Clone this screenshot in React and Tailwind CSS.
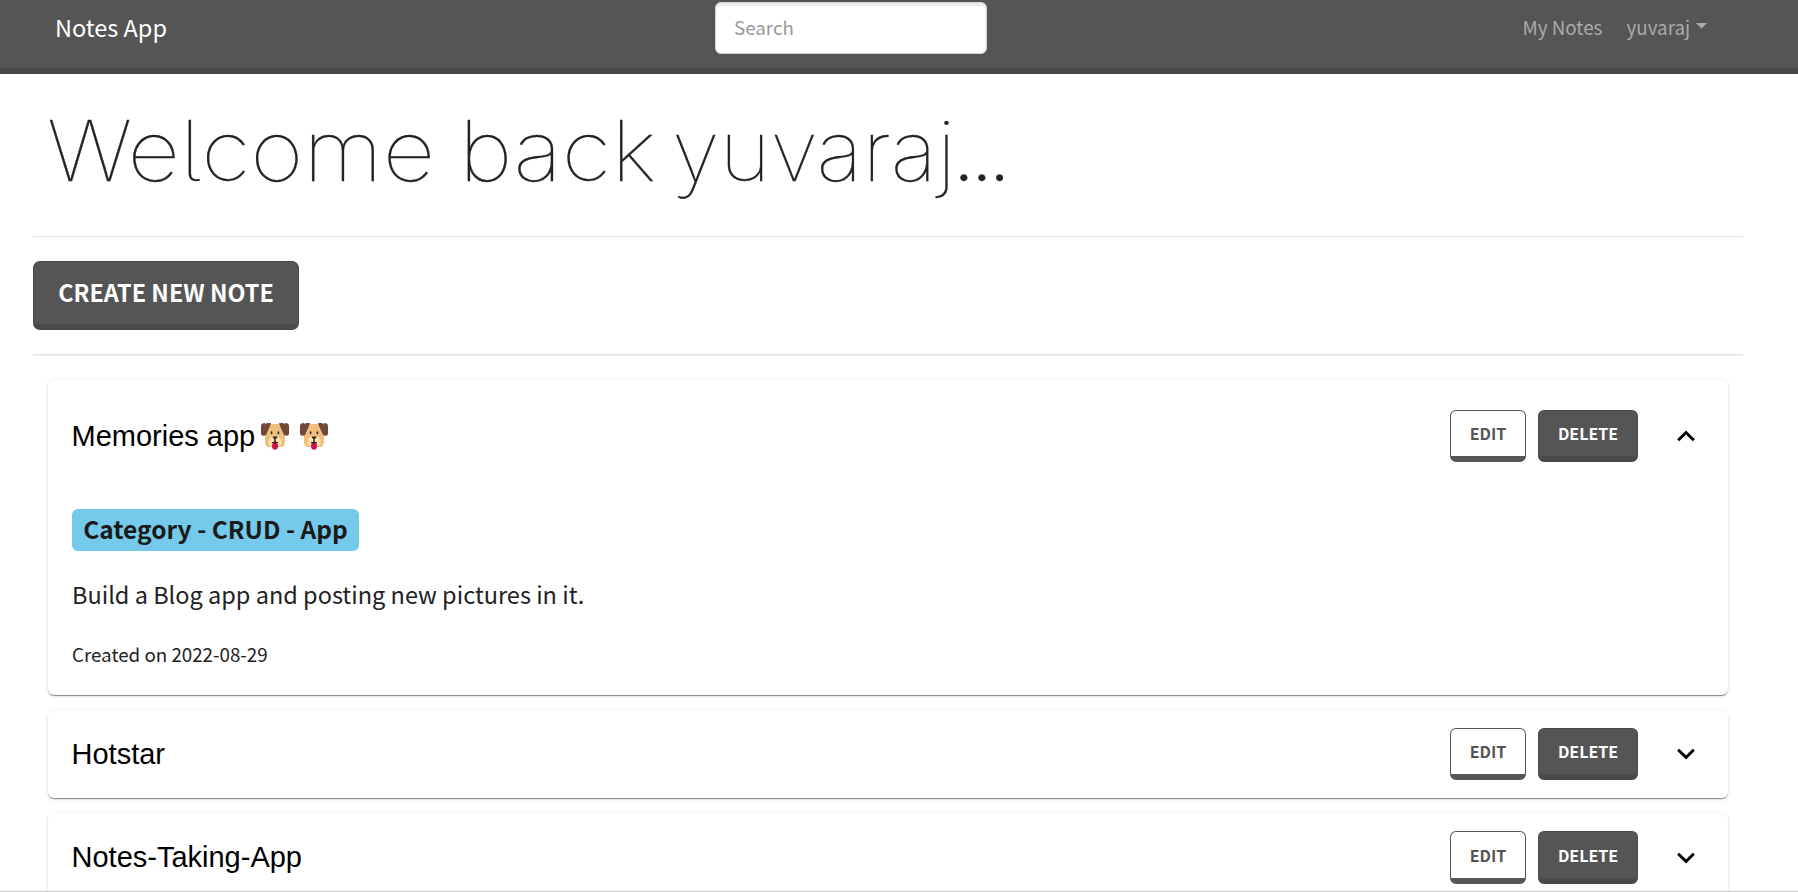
const SANS = "font-['Noto_Sans_CJK_JP','Noto_Sans_CJK_SC','Open_Sans',sans-serif]";

function Dog({ className }) {
  return (
    <svg viewBox="0 0 28 27" className={className} aria-hidden="true">
      <path d="M4 1h20v18q0 5-4 5H8q-4 0-4-5z" fill="#f1bf7d" />
      <path d="M4 2Q4 0 7 0h3l-1 3-4 9Q0 14 0 10V3Q0 0 4 0z" fill="#6f4839" />
      <path d="M24 2q0-2-3-2h-3l1 3 4 9q5 2 5-2V3q0-3-4-3z" fill="#6f4839" />
      <path d="M7.500 19q0-6 6.500-6t6.500 6q0 4.500-3.500 4.500h-6q-3.500 0-3.500-4.500z" fill="#fde0ab" />
      <rect x="9.8" y="8.3" width="1.6" height="3" rx=".8" fill="#222" />
      <rect x="16.6" y="8.3" width="1.6" height="3" rx=".8" fill="#222" />
      <path d="M11.8 13.6h4.600v1l-1.700 1.500v3h2.300v1h-6v-1h2.300v-3l-1.500-1.500z" fill="#2b211c" />
      <ellipse cx="14" cy="23" rx="3" ry="3.700" fill="#d0104c" />
      <path d="M13.400 18h1.200v3.200h-1.200z" fill="#2b211c" />
    </svg>
  );
}

function Chevron({ up }) {
  return (
    <svg viewBox="0 0 18 12" className="mr-[33px] h-3 w-[18px]" fill="none" stroke="#000" strokeWidth="3">
      <path d={up ? "M1.200 10.300 9 2.500l7.800 7.800" : "M1.200 1.700 9 9.500l7.800-7.800"} />
    </svg>
  );
}

function NoteCard({ title, open, tall, dogs, children }) {
  const header = open ? "h-[112px]" : tall ? "h-[90px]" : "h-[88px]";
  const button = tall ? "h-[53px] -mt-px" : "h-[52px]";
  return (
    <article className="rounded-[6px] bg-white shadow-[0_2px_1px_-1px_rgba(0,0,0,0.3),0_1px_1px_0_rgba(0,0,0,0.2),0_1px_4px_0_rgba(0,0,0,0.12)]">
      <header className={`flex items-center pl-[23.500px] ${header}`}>
        <h2
          className={`flex flex-1 items-center font-['Liberation_Sans',Arial,sans-serif] text-[29px] leading-[36px] text-black ${tall ? "-mt-[2px]" : ""}`}
        >
          {title}
          {dogs && (
            <>
              <Dog className="ml-[6px] h-[27px] w-[28px]" />
              <Dog className="ml-[11px] h-[27px] w-[28px]" />
            </>
          )}
        </h2>
        <button
          className={`w-[76px] rounded-[6px] border border-b-[6px] border-[#555] bg-white pb-px text-[16px] leading-[44px] font-bold text-[#555] ${button}`}
        >
          EDIT
        </button>
        <button
          className={`mr-[39px] ml-3 w-[100px] rounded-[6px] border border-b-[6px] border-[#4a4a4a] bg-[#555] pb-px text-[16px] leading-[44px] font-bold text-white ${button}`}
        >
          DELETE
        </button>
        <Chevron up={open} />
      </header>
      {children}
    </article>
  );
}

export default function App() {
  return (
    <div className={`h-[892px] overflow-hidden border-b border-[#ccc] bg-white text-[#222] ${SANS}`}>
      <nav className="flex h-[74px] items-start border-b-[6px] border-[#484848] bg-[#555] pt-[2px] pl-[55px]">
        <a className="w-[660px] text-[23.500px] leading-[50px] text-white">Notes App</a>
        <input
          placeholder="Search"
          className="h-[52px] w-[272px] rounded-[6px] border border-[#ced4da] bg-white px-[18px] pb-[3px] text-[18.750px] shadow-[inset_0_3px_0_rgba(0,0,0,0.075)] placeholder:text-[#999]"
        />
        <div className="ml-[535.500px] flex items-center text-[18.800px] leading-[50px] text-[#aaa]">
          <a className="w-[104px]">My Notes</a>
          <a>yuvaraj</a>
          <svg viewBox="0 0 13 7" className="mb-[3px] ml-[5px] h-[6px] w-[13px]">
            <path d="M0 0h13L6.500 6.500z" fill="#aaa" />
          </svg>
        </div>
      </nav>
      <main className="pr-[55px] pl-[33px]">
        <h1 className="flex h-[162px] pt-[27px] pl-[14px] font-['Inter',sans-serif] text-[84px] leading-[100px] font-[130] text-[#222] [font-feature-settings:'cv05'] [-webkit-text-stroke:0.3px_#222]">
          <span className="w-[412px] origin-left scale-x-[1.092]">Welcome</span>
          <span className="w-[213px] origin-left scale-x-[1.097]">back</span>
          <span className="origin-left scale-x-[1.04]">
            yuvara<span className="tracking-[-4px]">j</span>
            <span className="font-[170] tracking-[-6px]">...</span>
          </span>
        </h1>
        <hr className="border-[#e4e4e4]" />
        <button className="mt-6 mb-6 block h-[69px] w-[266px] rounded-[7px] border border-b-[6px] border-[#4a4a4a] bg-[#555] pb-[3px] text-[23.400px] leading-[58px] font-bold text-white">
          CREATE NEW NOTE
        </button>
        <hr className="h-[2px] border-t border-b border-t-[#e4e4e4] border-b-[#f1f1f1]" />
        <section className="flex flex-col gap-[15px] px-[15px] pt-6">
          <NoteCard title="Memories app" open dogs>
            <div className="h-[203px] px-6 pt-[17px]">
              <span className="block h-[42px] w-[287px] rounded-[6px] bg-[#75caeb] text-center text-[24.500px] leading-[40px] font-bold text-[#1a1a1a]">
                Category - CRUD - App
              </span>
              <p className="mt-[25px] text-[23.500px] leading-[36px]">Build a Blog app and posting new pictures in it.</p>
              <p className="mt-[26px] text-[18.750px] leading-[32px]">Created on 2022-08-29</p>
            </div>
          </NoteCard>
          <NoteCard title="Hotstar" />
          <NoteCard title="Notes-Taking-App" tall />
        </section>
      </main>
    </div>
  );
}
